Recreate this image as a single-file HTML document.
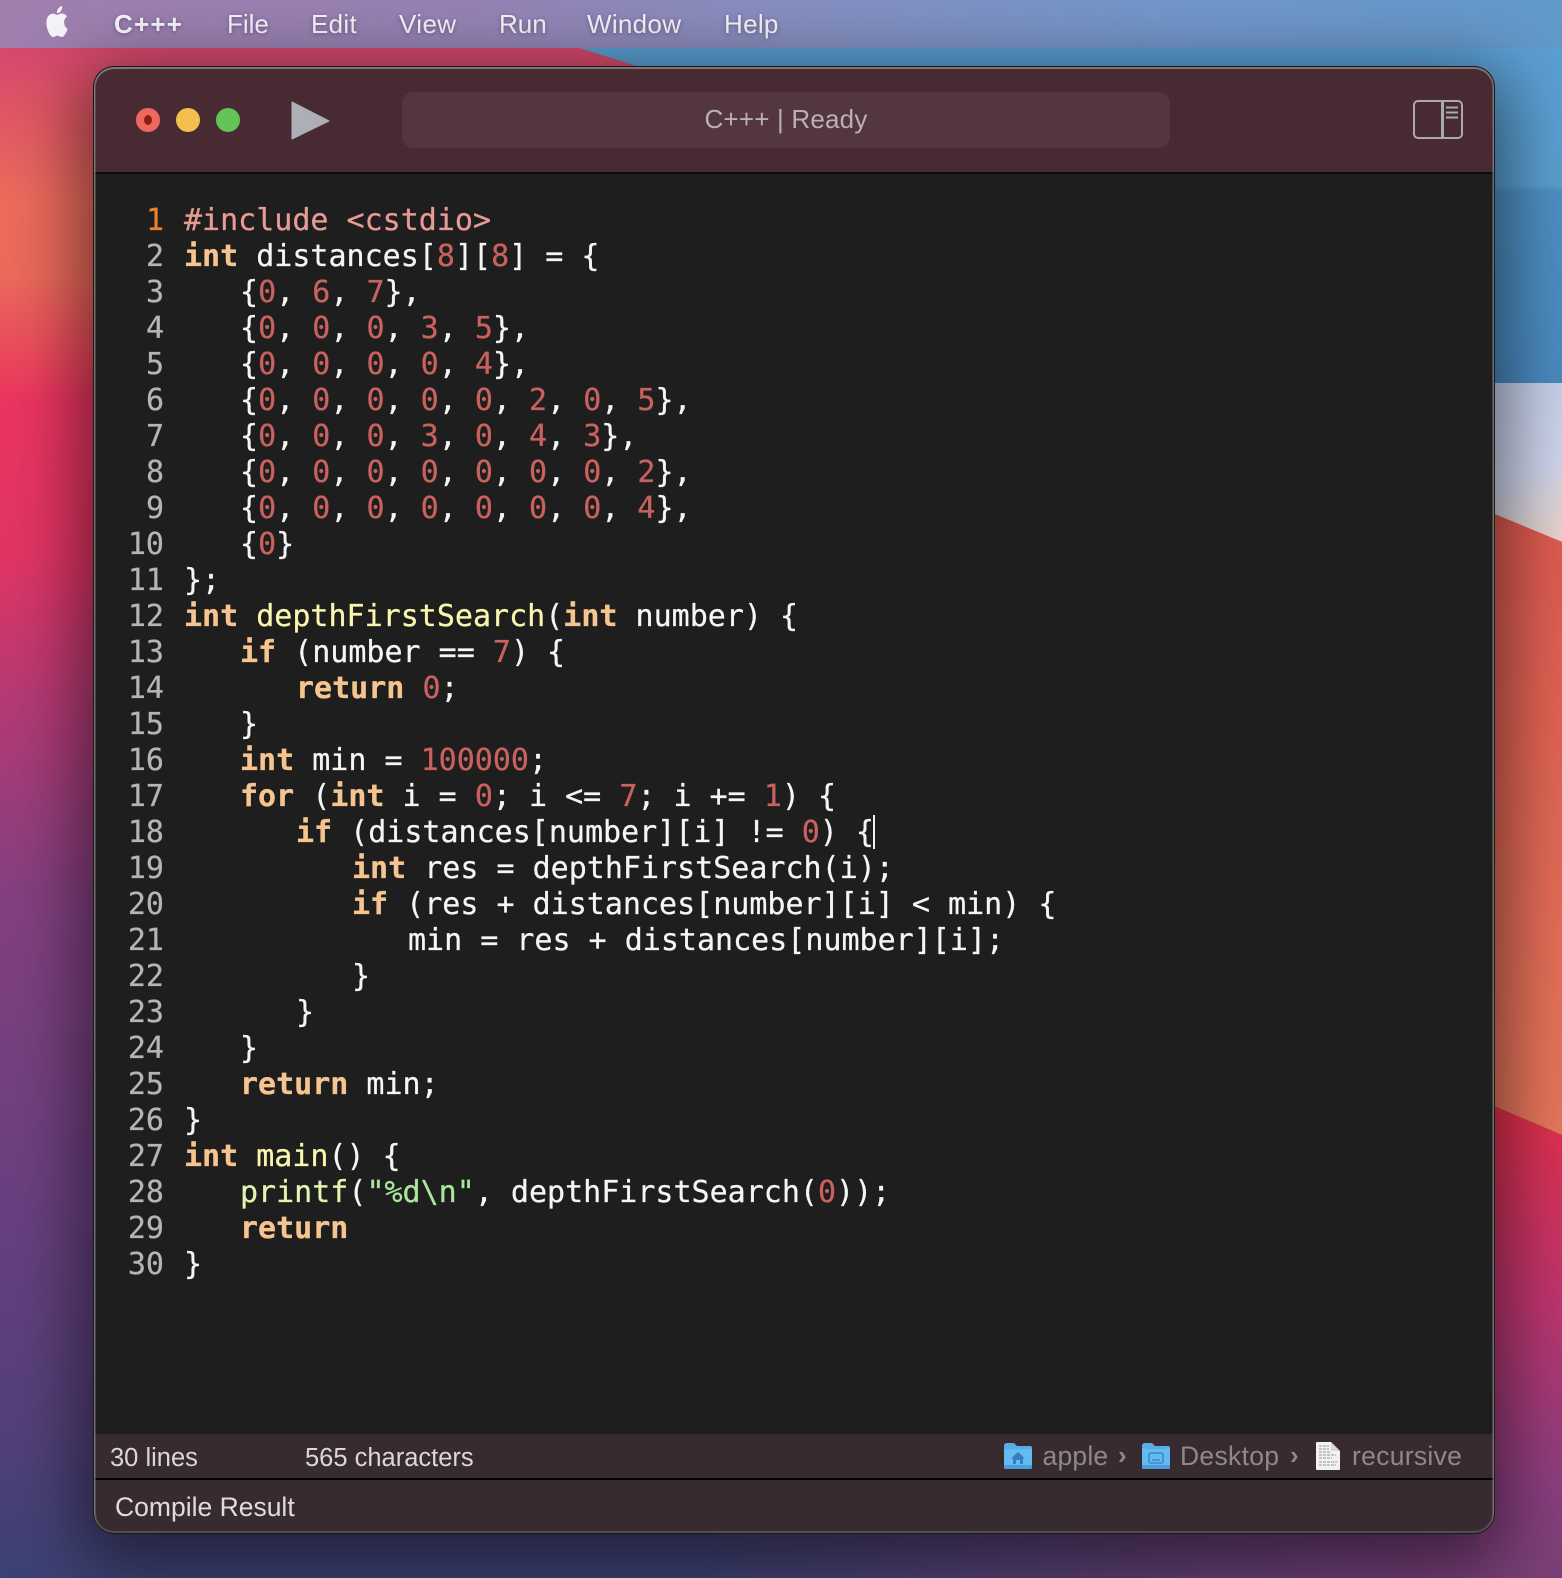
<!DOCTYPE html>
<html><head><meta charset="utf-8"><style>
*{margin:0;padding:0;box-sizing:border-box}
html,body{width:1562px;height:1578px;overflow:hidden;background:#333}
body{position:relative;font-family:"Liberation Sans",sans-serif}
.abs{position:absolute}
#bg{position:absolute;left:0;top:0}
.menu{position:absolute;top:0;left:0;width:1562px;height:48px;background:linear-gradient(90deg,#9f7fae 0%,#9683b5 30%,#878fc0 50%,#7397cb 75%,#6299cb 100%)}
.menu span{position:absolute;top:8px;font-size:26px;line-height:32px;color:#f6f4f8;text-shadow:0 1px 4px rgba(60,30,70,.45)}
#win{position:absolute;left:94px;top:67px;width:1400px;height:1466px;border-radius:20px;background:#1e1e1e;overflow:hidden;box-shadow:0 0 0 1px #1a1a1a,0 18px 70px 14px rgba(0,0,0,.52)}
#win:after{content:"";position:absolute;inset:0;border-radius:20px;box-shadow:inset 0 0 0 2px rgba(125,125,125,.42),inset 0 1px 0 1px rgba(200,200,200,.45);pointer-events:none}
.tb{position:absolute;left:0;top:0;width:100%;height:107px;background:#482a33;border-bottom:2px solid #0c0c0c}
.pill{position:absolute;left:308px;top:25px;width:768px;height:56px;border-radius:12px;background:#53363e}
.title{position:absolute;left:308px;top:25px;width:768px;height:56px;text-align:center;line-height:54px;font-size:26px;letter-spacing:.2px;color:#b8b2b4}
.dot{position:absolute;width:24px;height:24px;border-radius:50%;top:41px}
#code{position:absolute;left:0;top:0;font:30px/36px "DejaVu Sans Mono",monospace;color:#f5f5f5;white-space:pre;-webkit-text-stroke:.25px currentColor}
#code div{position:absolute;left:184px;height:36px}
#code i{position:absolute;font-style:normal;color:#b4b4b4;left:20px;width:144px;text-align:right;letter-spacing:0}
b{font-weight:700;color:#f6c48f}
u{text-decoration:none;color:#c9625f}
em{font-style:normal;color:#fbf6ae}
.st{position:absolute;left:0;top:1367px;width:100%;height:44px;background:#372a30}
.ln{position:absolute;left:0;top:1411px;width:100%;height:2px;background:#050505}
.cr{position:absolute;left:0;top:1413px;width:100%;height:53px;background:#372a30}
.t{position:absolute;white-space:pre}
</style></head><body>
<svg id="bg" width="1562" height="1578" viewBox="0 0 1562 1578">
<defs>
<linearGradient id="l" x1="0" y1="48" x2="0" y2="1578" gradientUnits="userSpaceOnUse">
<stop offset="0" stop-color="#d6486e"/><stop offset=".05" stop-color="#e25a64"/><stop offset=".1" stop-color="#ec6c5c"/><stop offset=".15" stop-color="#ec6a5c"/><stop offset=".2" stop-color="#ec4a5c"/><stop offset=".23" stop-color="#ec3560"/><stop offset=".33" stop-color="#e23564"/><stop offset=".42" stop-color="#b83a74"/><stop offset=".55" stop-color="#854080"/><stop offset=".75" stop-color="#6a4080"/><stop offset=".9" stop-color="#54407a"/><stop offset="1" stop-color="#3c4274"/>
</linearGradient>
<linearGradient id="b" x1="0" y1="48" x2="0" y2="390" gradientUnits="userSpaceOnUse">
<stop offset="0" stop-color="#5c9fd4"/><stop offset=".4" stop-color="#5ba0d2"/><stop offset=".42" stop-color="#4f90c4"/><stop offset="1" stop-color="#4b8ac0"/>
</linearGradient>
<linearGradient id="lv" x1="1494" y1="380" x2="1562" y2="530" gradientUnits="userSpaceOnUse">
<stop offset="0" stop-color="#c4cfea"/><stop offset=".6" stop-color="#cfd5ec"/><stop offset="1" stop-color="#e8d4cc"/>
</linearGradient>
<linearGradient id="r" x1="0" y1="510" x2="0" y2="1130" gradientUnits="userSpaceOnUse">
<stop offset="0" stop-color="#de5a50"/><stop offset="1" stop-color="#e8775c"/>
</linearGradient>
<linearGradient id="p" x1="0" y1="1110" x2="0" y2="1578" gradientUnits="userSpaceOnUse">
<stop offset="0" stop-color="#e2304c"/><stop offset=".4" stop-color="#c0356f"/><stop offset=".8" stop-color="#8c3f80"/><stop offset="1" stop-color="#7a4078"/>
</linearGradient>
<linearGradient id="f" x1="700" y1="0" x2="1480" y2="0" gradientUnits="userSpaceOnUse">
<stop offset="0" stop-color="#7a3f78" stop-opacity="0"/><stop offset="1" stop-color="#7a3f78" stop-opacity="1"/>
</linearGradient>
</defs>
<rect width="1562" height="1578" fill="url(#l)"/>
<polygon points="580,48 1562,48 1562,383 1480,383 1480,336" fill="url(#b)"/>
<polygon points="1480,383 1562,383 1562,542 1480,508" fill="url(#lv)"/>
<polygon points="1480,508 1562,542 1562,1135 1480,1100" fill="url(#r)"/>
<polygon points="1480,1100 1562,1135 1562,1578 1480,1578" fill="url(#p)"/>
<rect x="700" y="1500" width="780" height="78" fill="url(#f)"/>
</svg>
<div class="menu">
<svg class="abs" style="left:44px;top:6px" width="26" height="31" viewBox="0 0 24 24" preserveAspectRatio="none"><path fill="#f6f4f8" d="M12.152 6.896c-.948 0-2.415-1.078-3.96-1.04-2.04.027-3.91 1.183-4.961 3.014-2.117 3.675-.546 9.103 1.519 12.09 1.013 1.454 2.208 3.09 3.792 3.039 1.52-.065 2.09-.987 3.935-.987 1.831 0 2.35.987 3.96.948 1.637-.026 2.676-1.48 3.676-2.948 1.156-1.688 1.636-3.325 1.662-3.415-.039-.013-3.182-1.221-3.22-4.857-.026-3.04 2.48-4.494 2.597-4.559-1.429-2.09-3.623-2.324-4.39-2.376-2-.156-3.675 1.09-4.61 1.09zM15.53 3.83c.843-1.012 1.4-2.427 1.245-3.83-1.207.052-2.662.805-3.532 1.818-.78.896-1.454 2.338-1.273 3.714 1.338.104 2.715-.688 3.559-1.701"/></svg>
<span style="left:114px;font-weight:700;letter-spacing:1.2px">C+++</span>
<span style="left:227px">File</span>
<span style="left:311px;letter-spacing:.3px">Edit</span>
<span style="left:399px;letter-spacing:.4px">View</span>
<span style="left:499px">Run</span>
<span style="left:587px;letter-spacing:.3px">Window</span>
<span style="left:724px;letter-spacing:.3px">Help</span>
</div>
<div id="win">
<div class="tb"></div>
<div class="pill"></div>
<div class="title">C+++ | Ready</div>
<div class="dot" style="left:42px;background:#ee6a5f"></div>
<div class="dot" style="left:50px;top:48px;width:8px;height:10px;background:#8f1c12"></div>
<div class="dot" style="left:82px;background:#f5bf4f"></div>
<div class="dot" style="left:122px;background:#61c454"></div>
<svg class="abs" style="left:197px;top:34px" width="40" height="40" viewBox="0 0 40 40"><path d="M1 1 L38 20 L1 38 Z" fill="#acafb6" stroke="#acafb6" stroke-width="1" stroke-linejoin="round"/></svg>
<svg class="abs" style="left:1319px;top:33px" width="50" height="40" viewBox="0 0 50 40" fill="none" stroke="#a9a9b1"><rect x="1" y="1" width="48" height="37" rx="4" stroke-width="2"/><path d="M29.5 1V38" stroke-width="3"/><path d="M33 7.5H45M33 12.5H45M33 17.5H45" stroke-width="2"/></svg>
<div class="st"></div>
<div class="ln"></div>
<div class="cr"></div>
<div class="t" style="left:16px;top:1368px;font-size:25.5px;line-height:46px;color:#dbd7d9">30 lines</div>
<div class="t" style="left:211px;top:1368px;font-size:25.5px;line-height:46px;color:#dbd7d9">565 characters</div>
<div class="t" style="left:21px;top:1417px;font-size:26.5px;line-height:46px;color:#e0dcde">Compile Result</div>
<svg class="abs" style="left:910px;top:1376px" width="28" height="26" viewBox="0 0 28 26"><path d="M0 3Q0 0 3 0H10L13 3H26Q28 3 28 5V24Q28 26 26 26H2Q0 26 0 24Z" fill="#57ade8"/><path d="M0 6H28V24Q28 26 26 26H2Q0 26 0 24Z" fill="#62bcf0"/><path d="M0 22H28V24Q28 26 26 26H2Q0 26 0 24Z" fill="#4a9edc"/><path d="M14 9L21 15.5H19V21H16V17H12V21H9V15.5H7Z" fill="#3a7cc4"/></svg>
<div class="t" style="left:948.5px;top:1366px;font-size:26.5px;letter-spacing:.2px;line-height:46px;color:#8f888b">apple</div>
<div class="t" style="left:1024px;top:1366px;font-size:26px;font-weight:700;line-height:44px;color:#8f888b">›</div>
<svg class="abs" style="left:1048px;top:1376px" width="28" height="26" viewBox="0 0 28 26"><path d="M0 3Q0 0 3 0H10L13 3H26Q28 3 28 5V24Q28 26 26 26H2Q0 26 0 24Z" fill="#57ade8"/><path d="M0 6H28V24Q28 26 26 26H2Q0 26 0 24Z" fill="#62bcf0"/><path d="M0 22H28V24Q28 26 26 26H2Q0 26 0 24Z" fill="#4a9edc"/><rect x="7" y="10" width="14" height="10" rx="1.5" fill="none" stroke="#3f86c8" stroke-width="1.5"/><path d="M10 17H18" stroke="#3f86c8" stroke-width="1.5"/></svg>
<div class="t" style="left:1086px;top:1366px;font-size:26.5px;letter-spacing:.3px;line-height:46px;color:#8f888b">Desktop</div>
<div class="t" style="left:1196px;top:1366px;font-size:26px;font-weight:700;line-height:44px;color:#8f888b">›</div>
<svg class="abs" style="left:1222px;top:1375px" width="24" height="28" viewBox="0 0 24 28"><path d="M1 0H15L24 9V27Q24 28 23 28H1Q0 28 0 27V1Q0 0 1 0Z" fill="#f2f0f0"/><path d="M15 0L24 9H16Q15 9 15 8Z" fill="#d8d6d6"/><path d="M3 4H13M3 7H13M3 10H14M3 13H20M3 16H16M3 20H21M3 23H20" stroke="#c4c2c2" stroke-width="2" stroke-dasharray="3 1"/></svg>
<div class="t" style="left:1258px;top:1366px;font-size:26.5px;letter-spacing:.3px;line-height:46px;color:#8f888b">recursive</div>
</div>
<div id="code" style="left:0;top:2px;position:absolute;width:1562px;height:1576px">
<i style="top:201px;color:#e8832a">1</i><div style="top:201px;color:#e89a94">#include &lt;cstdio&gt;</div>
<i style="top:237px">2</i><div style="top:237px"><b>int</b> distances[<u>8</u>][<u>8</u>] = {</div>
<i style="top:273px">3</i><div style="top:273px;padding-left:56px">{<u>0</u>, <u>6</u>, <u>7</u>},</div>
<i style="top:309px">4</i><div style="top:309px;padding-left:56px">{<u>0</u>, <u>0</u>, <u>0</u>, <u>3</u>, <u>5</u>},</div>
<i style="top:345px">5</i><div style="top:345px;padding-left:56px">{<u>0</u>, <u>0</u>, <u>0</u>, <u>0</u>, <u>4</u>},</div>
<i style="top:381px">6</i><div style="top:381px;padding-left:56px">{<u>0</u>, <u>0</u>, <u>0</u>, <u>0</u>, <u>0</u>, <u>2</u>, <u>0</u>, <u>5</u>},</div>
<i style="top:417px">7</i><div style="top:417px;padding-left:56px">{<u>0</u>, <u>0</u>, <u>0</u>, <u>3</u>, <u>0</u>, <u>4</u>, <u>3</u>},</div>
<i style="top:453px">8</i><div style="top:453px;padding-left:56px">{<u>0</u>, <u>0</u>, <u>0</u>, <u>0</u>, <u>0</u>, <u>0</u>, <u>0</u>, <u>2</u>},</div>
<i style="top:489px">9</i><div style="top:489px;padding-left:56px">{<u>0</u>, <u>0</u>, <u>0</u>, <u>0</u>, <u>0</u>, <u>0</u>, <u>0</u>, <u>4</u>},</div>
<i style="top:525px">10</i><div style="top:525px;padding-left:56px">{<u>0</u>}</div>
<i style="top:561px">11</i><div style="top:561px">};</div>
<i style="top:597px">12</i><div style="top:597px"><b>int</b> <em>depthFirstSearch</em>(<b>int</b> number) {</div>
<i style="top:633px">13</i><div style="top:633px;padding-left:56px"><b>if</b> (number == <u>7</u>) {</div>
<i style="top:669px">14</i><div style="top:669px;padding-left:112px"><b>return</b> <u>0</u>;</div>
<i style="top:705px">15</i><div style="top:705px;padding-left:56px">}</div>
<i style="top:741px">16</i><div style="top:741px;padding-left:56px"><b>int</b> min = <u>100000</u>;</div>
<i style="top:777px">17</i><div style="top:777px;padding-left:56px"><b>for</b> (<b>int</b> i = <u>0</u>; i &lt;= <u>7</u>; i += <u>1</u>) {</div>
<i style="top:813px">18</i><div style="top:813px;padding-left:112px"><b>if</b> (distances[number][i] != <u>0</u>) {</div>
<i style="top:849px">19</i><div style="top:849px;padding-left:168px"><b>int</b> res = depthFirstSearch(i);</div>
<i style="top:885px">20</i><div style="top:885px;padding-left:168px"><b>if</b> (res + distances[number][i] &lt; min) {</div>
<i style="top:921px">21</i><div style="top:921px;padding-left:224px">min = res + distances[number][i];</div>
<i style="top:957px">22</i><div style="top:957px;padding-left:168px">}</div>
<i style="top:993px">23</i><div style="top:993px;padding-left:112px">}</div>
<i style="top:1029px">24</i><div style="top:1029px;padding-left:56px">}</div>
<i style="top:1065px">25</i><div style="top:1065px;padding-left:56px"><b>return</b> min;</div>
<i style="top:1101px">26</i><div style="top:1101px">}</div>
<i style="top:1137px">27</i><div style="top:1137px"><b>int</b> <em>main</em>() {</div>
<i style="top:1173px">28</i><div style="top:1173px;padding-left:56px"><span style="color:#e2f5ae">printf</span>(<span style="color:#a9e69c">"%d\n"</span>, depthFirstSearch(<u>0</u>));</div>
<i style="top:1209px">29</i><div style="top:1209px;padding-left:56px"><b>return</b></div>
<i style="top:1245px">30</i><div style="top:1245px">}</div>
</div>
<div class="abs" style="left:873px;top:815px;width:2px;height:34px;background:#f0f0f0"></div>
</body></html>
